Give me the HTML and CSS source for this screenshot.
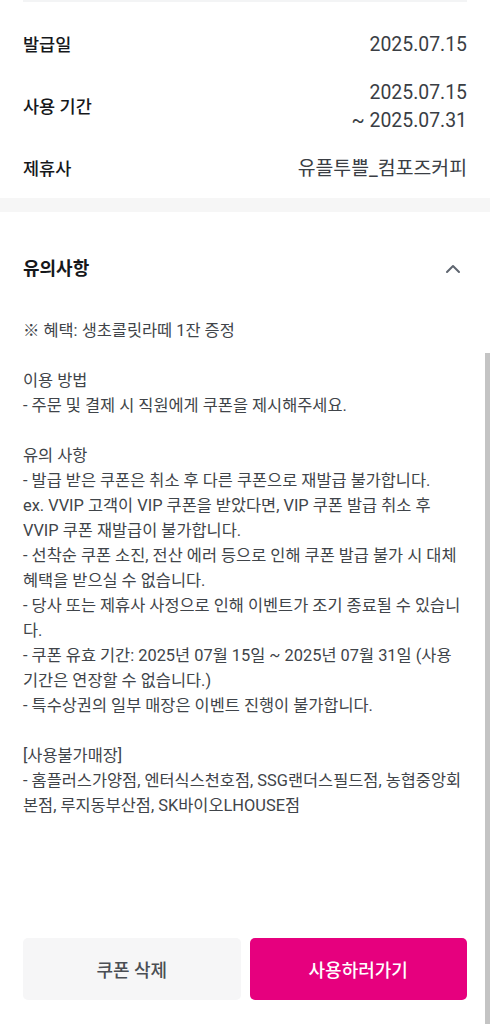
FILE: index.html
```html
<!DOCTYPE html>
<html lang="ko">
<head>
<meta charset="utf-8">
<link rel="stylesheet" href="styles.css">
</head>
<body>
<div class="page">
  <div class="top-line"></div>
  <section class="info">
    <div class="row">
      <div class="label">발급일</div>
      <div class="value">2025.07.15</div>
    </div>
    <div class="row">
      <div class="label">사용 기간</div>
      <div class="value">2025.07.15<br>~ 2025.07.31</div>
    </div>
    <div class="row">
      <div class="label">제휴사</div>
      <div class="value">유플투쁠_컴포즈커피</div>
    </div>
  </section>
  <div class="band"></div>
  <section class="notice">
    <div class="notice-head">
      <h2 class="notice-title">유의사항</h2>
      <svg class="chevron" width="16" height="10" viewBox="0 0 16 10"><path d="M2 8 L8 2 L14 8" fill="none" stroke="#5f6670" stroke-width="2" stroke-linecap="round" stroke-linejoin="round"/></svg>
    </div>
    <div class="notice-body">※ 혜택: 생초콜릿라떼 1잔 증정<br><br>이용 방법<br>- 주문 및 결제 시 직원에게 쿠폰을 제시해주세요.<br><br>유의 사항<br>- 발급 받은 쿠폰은 취소 후 다른 쿠폰으로 재발급 불가합니다.<br>ex. VVIP 고객이 VIP 쿠폰을 받았다면, VIP 쿠폰 발급 취소 후 VVIP 쿠폰 재발급이 불가합니다.<br>- 선착순 쿠폰 소진, 전산 에러 등으로 인해 쿠폰 발급 불가 시 대체 혜택을 받으실 수 없습니다.<br>- 당사 또는 제휴사 사정으로 인해 이벤트가 조기 종료될 수 있습니다.<br>- 쿠폰 유효 기간: 2025년 07월 15일 ~ 2025년 07월 31일 (사용 기간은 연장할 수 없습니다.)<br>- 특수상권의 일부 매장은 이벤트 진행이 불가합니다.<br><br>[사용불가매장]<br>- 홈플러스가양점, 엔터식스천호점, SSG랜더스필드점, 농협중앙회본점, 루지동부산점, SK바이오LHOUSE점</div>
  </section>
  <footer class="actions">
    <button class="btn btn-sub">쿠폰 삭제</button>
    <button class="btn btn-main">사용하러가기</button>
  </footer>
  <div class="scroll-thumb"></div>
</div>
</body>
</html>
```
FILE: styles.css
```css
* { box-sizing: border-box; }
html, body { margin: 0; padding: 0; }
body {
  font-family: Roboto, "Noto Sans CJK KR", sans-serif;
  background: #fff;
  color: #222;
}
.page {
  position: relative;
  min-height: 1024px;
  display: flex;
  flex-direction: column;
  overflow: hidden;
}
.top-line {
  margin: 0 23px;
  border-top: 2px solid #f3f4f5;
}
.info {
  padding: 29px 23px 15px;
  display: flex;
  flex-direction: column;
  gap: 20px;
}
.row {
  display: flex;
  justify-content: space-between;
  align-items: center;
}
.label {
  font-size: 17.5px;
  font-weight: 500;
  color: #16181b;
  line-height: 28px;
}
.value {
  font-size: 19.4px;
  color: #3a3e44;
  line-height: 28px;
  text-align: right;
}
.band {
  height: 14px;
  background: #f6f6f6;
}
.notice {
  padding: 0 23px;
}
.notice-head {
  display: flex;
  justify-content: space-between;
  align-items: center;
  padding-top: 45px;
}
.notice-title {
  margin: 0;
  font-size: 18px;
  font-weight: 700;
  line-height: 24px;
  color: #16181b;
}
.chevron {
  margin-right: 6px;
}
.notice-body {
  margin-top: 37px;
  font-size: 16.4px;
  line-height: 25px;
  color: #404449;
  padding-right: 2px;
}
.actions {
  margin-top: auto;
  padding: 0 23px 24px;
  display: flex;
  gap: 9px;
}
.btn {
  flex: 1;
  height: 62px;
  border: 0;
  border-radius: 5px;
  font-family: inherit;
  font-size: 18px;
  font-weight: 500;
}
.btn-sub {
  background: #f6f6f7;
  color: #4a4e54;
}
.btn-main {
  background: #e6007e;
  color: #fff;
}
.scroll-thumb {
  position: absolute;
  right: 0;
  top: 353px;
  bottom: 0;
  width: 5px;
  background: #c4c4c4;
}
```
